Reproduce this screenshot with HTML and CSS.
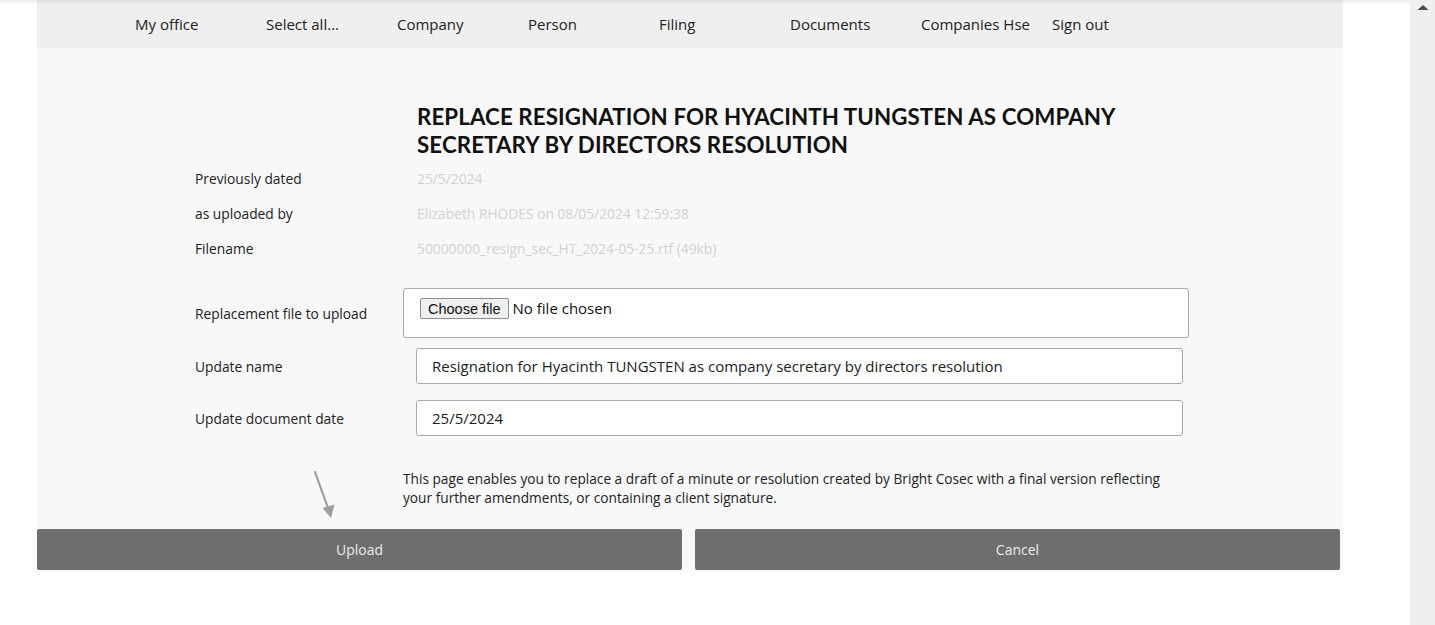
FILE: index.html
```html
<!DOCTYPE html>
<html lang="en">
<head>
<meta charset="utf-8">
<title>Replace resignation</title>
<link rel="stylesheet" href="styles.css">
</head>
<body>
<div class="page">
  <div class="container">
    <nav class="nav">
      <a class="nav-item">My office</a>
      <a class="nav-item">Select all...</a>
      <a class="nav-item">Company</a>
      <a class="nav-item">Person</a>
      <a class="nav-item">Filing</a>
      <a class="nav-item">Documents</a>
      <a class="nav-item">Companies Hse</a>
      <a class="nav-item">Sign out</a>
    </nav>
    <main class="content">
      <h1 class="title">REPLACE RESIGNATION FOR HYACINTH TUNGSTEN AS COMPANY SECRETARY BY DIRECTORS RESOLUTION</h1>
      <div class="info-row"><span class="label">Previously dated</span><span class="value">25/5/2024</span></div>
      <div class="info-row"><span class="label">as uploaded by</span><span class="value">Elizabeth RHODES on 08/05/2024 12:59:38</span></div>
      <div class="info-row"><span class="label">Filename</span><span class="value">50000000_resign_sec_HT_2024-05-25.rtf (49kb)</span></div>

      <div class="form-row file-row">
        <span class="label">Replacement file to upload</span>
        <div class="file-box"><span class="file-btn">Choose file</span><span class="file-status">No file chosen</span></div>
      </div>
      <div class="form-row name-row">
        <span class="label">Update name</span>
        <div class="text-input">Resignation for Hyacinth TUNGSTEN as company secretary by directors resolution</div>
      </div>
      <div class="form-row date-row">
        <span class="label">Update document date</span>
        <div class="text-input">25/5/2024</div>
      </div>
      <p class="note">This page enables you to replace a draft of a minute or resolution created by Bright Cosec with a final version reflecting your further amendments, or containing a client signature.</p>
      <div class="actions">
        <button class="btn">Upload</button>
        <button class="btn">Cancel</button>
      </div>
      <svg class="pointer" width="60" height="70" viewBox="0 0 60 70">
        <line x1="15" y1="11" x2="28" y2="47" stroke="#9e9e9e" stroke-width="2.2" stroke-linecap="round"/>
        <polygon points="22.5,47 34.5,43.5 31,57" fill="#9e9e9e"/>
      </svg>
    </main>
  </div>
</div>
<div class="scrollbar">
  <svg class="scroll-up" width="12" height="8" viewBox="0 0 12 8"><polygon points="0.5,7 11.5,7 6,2" fill="#4a4a4a"/></svg>
</div>
</body>
</html>
```
FILE: styles.css
```css
html, body {
  margin: 0;
  padding: 0;
}
body {
  width: 1435px;
  height: 625px;
  overflow: hidden;
  display: flex;
  background: #ffffff;
  font-family: "Open Sans", "Noto Sans", sans-serif;
  color: #222;
}
.page {
  position: relative;
  flex: 1;
  padding-left: 37px;
  background: #ffffff;
}
.page::before {
  content: "";
  position: absolute;
  left: 0;
  right: 0;
  top: 0;
  height: 5px;
  background: linear-gradient(rgba(0,0,0,0.07), rgba(0,0,0,0));
  z-index: 2;
}
.container {
  width: 1306px;
  background: #f8f8f8;
  padding-bottom: 2px;
}
.nav {
  display: flex;
  align-items: center;
  height: 47px;
  padding-bottom: 1px;
  padding-left: 98px;
  background: #efefef;
}
.nav-item {
  flex: none;
  width: 131px;
  font-size: 15px;
  color: #222;
  text-decoration: none;
}
.content {
  position: relative;
  padding-top: 55px;
}
.title {
  margin: 0 0 2px 380px;
  width: 760px;
  font-family: Lato, "Open Sans", sans-serif;
  font-weight: 700;
  font-size: 22.3px;
  line-height: 28px;
  color: #111;
  letter-spacing: 0.1px;
}
.info-row, .form-row {
  display: flex;
  align-items: center;
  margin-left: 158px;
}
.info-row {
  height: 35px;
  font-size: 13.8px;
}
.label {
  flex: none;
  width: 208px;
  font-size: 13.8px;
  color: #222;
}
.value {
  padding-left: 14px;
  color: #d2d2d2;
}
.form-row.file-row {
  margin-top: 22px;
}
.file-box {
  box-sizing: border-box;
  width: 786px;
  height: 50px;
  display: flex;
  align-items: flex-start;
  padding: 9px 0 0 16px;
  background: #fff;
  border: 1px solid #a9a9a9;
  border-radius: 3px;
}
.file-btn {
  box-sizing: border-box;
  height: 21px;
  padding: 0 7px;
  display: flex;
  align-items: center;
  font-family: "Liberation Sans", Arial, sans-serif;
  font-size: 14.5px;
  color: #111;
  background: #efefef;
  border: 1px solid #8d8d8d;
  border-radius: 2px;
}
.file-status {
  margin-left: 4px;
  font-size: 15px;
  line-height: 20px;
  color: #111;
}
.form-row.name-row {
  margin-top: 10px;
}
.form-row.date-row {
  margin-top: 16px;
}
.text-input {
  box-sizing: border-box;
  margin-left: 13px;
  width: 767px;
  height: 36px;
  display: flex;
  align-items: center;
  padding-left: 15px;
  background: #fff;
  border: 1px solid #a9a9a9;
  border-radius: 3px;
  font-size: 15px;
  color: #222;
}
.note {
  margin: 33px 0 0 366px;
  width: 778px;
  font-size: 13.7px;
  line-height: 19px;
  color: #222;
}
.actions {
  display: flex;
  gap: 13px;
  width: 1303px;
  margin-top: 22px;
}
.btn {
  flex: 1;
  height: 41px;
  border: none;
  border-radius: 2px;
  background: #6e6e6e;
  color: #ececec;
  font-family: "Open Sans", sans-serif;
  font-size: 14px;
  padding: 0;
}
.pointer {
  position: absolute;
  left: 263px;
  top: 413px;
}
.scrollbar {
  flex: none;
  width: 25px;
  height: 625px;
  background: #efefef;
  display: flex;
  justify-content: center;
}
.scroll-up {
  margin-top: 3px;
}
```
